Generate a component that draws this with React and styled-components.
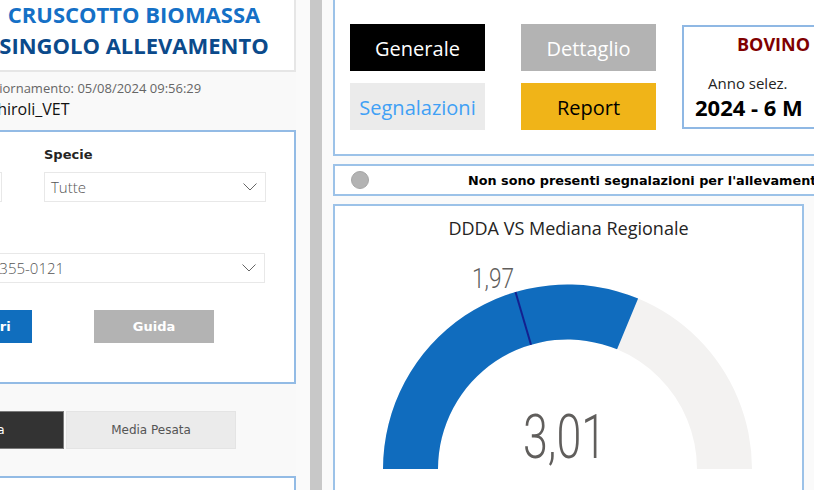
import React from 'react';
import styled, { createGlobalStyle } from 'styled-components';

const GlobalStyle = createGlobalStyle`
  html, body {
    margin: 0;
    padding: 0;
    background: #fafafa;
    overflow: hidden;
  }
  body {
    font-family: "Open Sans", "Liberation Sans", sans-serif;
  }
`;

const Page = styled.div`
  display: flex;
  width: 814px;
  height: 490px;
  overflow: hidden;
  background: #fafafa;
`;

/* ---------- left column ---------- */

const LeftColumn = styled.div`
  flex: 0 0 406px;
  margin-left: -110px;
  display: flex;
  flex-direction: column;
  background: #f9f9f9;
`;

const TitleBox = styled.div`
  margin: -4px 0 0 82px;
  height: 76px;
  box-sizing: border-box;
  border: 2px solid #e6e6e6;
  background: #fff;
  padding-top: 1px;
  display: flex;
  flex-direction: column;
  align-items: center;
`;

const TitleLine = styled.div`
  font-family: "Open Sans", sans-serif;
  font-weight: 700;
  font-size: 22px;
  line-height: 31px;
  white-space: nowrap;
  color: ${p => p.$color};
`;

const InfoLine = styled.div`
  padding-left: ${p => p.$indent}px;
  margin-top: ${p => p.$top}px;
  font-size: ${p => p.$size}px;
  line-height: ${p => p.$lh}px;
  color: ${p => p.$color};
  white-space: nowrap;
`;

const FilterBox = styled.div`
  margin-top: 11px;
  box-sizing: border-box;
  border: 2px solid #93bbe5;
  background: #fff;
  padding: 14px 28px 39px 18px;
`;

const FilterGrid = styled.div`
  display: grid;
  grid-template-columns: 92px 222px;
  column-gap: 42px;
  row-gap: 25px;
`;

const Field = styled.div`
  display: flex;
  flex-direction: column;
  grid-column: ${p => (p.$wide ? '1 / -1' : 'auto')};
  margin-right: ${p => (p.$wide ? 1 : 0)}px;
`;

const Label = styled.div`
  font-family: "DejaVu Sans", sans-serif;
  font-weight: 700;
  font-size: 13px;
  line-height: 18px;
  color: #252423;
  margin-bottom: 8px;
  white-space: nowrap;
`;

const Dropdown = styled.div`
  height: 30px;
  box-sizing: border-box;
  border: 1px solid #e8e8e8;
  background: #fff;
  display: flex;
  align-items: center;
  justify-content: space-between;
  padding: 0 8px 0 6px;
  font-family: "Open Sans", sans-serif;
  font-weight: 300;
  font-size: 15px;
  color: #555;
  white-space: nowrap;
  overflow: hidden;
`;

const ButtonRow = styled.div`
  display: flex;
  gap: 62px;
  margin: 27px 0 0 2px;
`;

const ActionButton = styled.div`
  width: 120px;
  height: 33px;
  background: ${p => p.$bg};
  color: #fff;
  display: flex;
  align-items: center;
  justify-content: center;
  font-family: "DejaVu Sans", sans-serif;
  font-weight: 700;
  font-size: 13px;
  white-space: nowrap;
`;

const ToggleRow = styled.div`
  display: flex;
  gap: 2px;
  margin: 27px 0 0 4px;
`;

const ToggleSegment = styled.div`
  width: 170px;
  height: 38px;
  box-sizing: border-box;
  border: 1px solid ${p => (p.$active ? '#7a7a7a' : '#e4e4e4')};
  background: ${p => (p.$active ? '#333333' : '#ebebeb')};
  color: ${p => (p.$active ? '#ffffff' : '#555555')};
  display: flex;
  align-items: center;
  justify-content: center;
  font-family: "DejaVu Sans", sans-serif;
  font-size: 12px;
`;

const BottomBox = styled.div`
  margin-top: 27px;
  flex: 1;
  border: 2px solid #93bbe5;
  border-bottom: none;
  background: #fff;
`;

/* ---------- separator ---------- */

const Separator = styled.div`
  flex: 0 0 12px;
  margin-left: 14px;
  background: #c8c8c8;
`;

/* ---------- right column ---------- */

const RightColumn = styled.div`
  flex: 0 0 560px;
  margin-left: 11px;
  display: flex;
  flex-direction: column;
`;

const TopBox = styled.div`
  margin-top: -4px;
  height: 160px;
  box-sizing: border-box;
  border: 2px solid #9cc2e8;
  background: #fff;
  padding: 26px 0 0 15px;
  display: flex;
  align-items: flex-start;
`;

const NavGrid = styled.div`
  display: grid;
  grid-template-columns: 135px 135px;
  grid-auto-rows: 47px;
  column-gap: 36px;
  row-gap: 12px;
`;

const NavButton = styled.div`
  background: ${p => p.$bg};
  color: ${p => p.$color};
  display: flex;
  align-items: center;
  justify-content: center;
  padding-top: 2px;
  box-sizing: border-box;
  font-size: 20px;
  white-space: nowrap;
`;

const InfoCard = styled.div`
  margin: 1px 0 0 26px;
  width: 140px;
  height: 104px;
  box-sizing: border-box;
  border: 2px solid #8fb8e4;
  background: #fff;
  padding-top: 6px;
`;

const CardLine = styled.div`
  padding-left: ${p => p.$indent}px;
  margin-top: ${p => p.$top}px;
  font-size: ${p => p.$size}px;
  line-height: ${p => p.$lh}px;
  font-weight: ${p => p.$weight};
  color: ${p => p.$color};
  white-space: nowrap;
`;

const NotifBar = styled.div`
  margin-top: 8px;
  height: 32px;
  box-sizing: border-box;
  border: 2px solid #9cc2e8;
  background: #fff;
  display: flex;
  align-items: center;
`;

const StatusDot = styled.div`
  width: 18px;
  height: 18px;
  box-sizing: border-box;
  margin-left: 16px;
  border-radius: 50%;
  background: #b3b3b3;
  border: 1px solid #a6a6a6;
`;

const NotifText = styled.div`
  margin-left: 99px;
  font-family: "DejaVu Sans", sans-serif;
  font-weight: 700;
  font-size: 12.8px;
  color: #000;
  white-space: nowrap;
`;

const GaugeBox = styled.div`
  margin-top: 8px;
  width: 471px;
  flex: 1;
  box-sizing: border-box;
  border: 2px solid #9cc2e8;
  border-bottom: none;
  background: #fff;
  padding-top: 10px;
`;

const GaugeTitle = styled.div`
  text-align: center;
  font-size: 18px;
  line-height: 24px;
  color: #252423;
`;

const GaugeSvg = styled.svg`
  display: block;
`;

const Chevron = () => (
  <svg width="14" height="8" viewBox="0 0 14 8">
    <polyline points="0.5,0.5 7,7 13.5,0.5" fill="none" stroke="#666" strokeWidth="1" />
  </svg>
);

const CX = 232.5;
const CY = 229;
const R_OUT = 184.5;
const R_IN = 129.5;

const pt = (deg, r) => {
  const a = (deg * Math.PI) / 180;
  return [CX + r * Math.cos(a), CY - r * Math.sin(a)];
};

const band = (fromDeg, toDeg) => {
  const [x1, y1] = pt(fromDeg, R_OUT);
  const [x2, y2] = pt(toDeg, R_OUT);
  const [x3, y3] = pt(toDeg, R_IN);
  const [x4, y4] = pt(fromDeg, R_IN);
  return `M${x1} ${y1} A${R_OUT} ${R_OUT} 0 0 1 ${x2} ${y2} L${x3} ${y3} A${R_IN} ${R_IN} 0 0 0 ${x4} ${y4} Z`;
};

const Gauge = ({ value, target, max }) => {
  const valueDeg = 180 - (value / max) * 180;
  const targetDeg = 180 - (target / max) * 180;
  const [tx1, ty1] = pt(targetDeg, R_OUT);
  const [tx2, ty2] = pt(targetDeg, R_IN);
  return (
    <GaugeSvg width="467" height="240" viewBox="0 0 467 240">
      <path d={band(180, 0)} fill="#f3f2f1" />
      <path d={band(180, valueDeg)} fill="#106cbe" />
      <line x1={tx1} y1={ty1} x2={tx2} y2={ty2} stroke="#14208f" strokeWidth="2" />
      <text x="158" y="48" textAnchor="middle" fontFamily="Roboto, sans-serif" fontWeight="300"
        fontSize="27" fill="#605e5c" textLength="42" lengthAdjust="spacingAndGlyphs">1,97</text>
      <text x="229.5" y="218" textAnchor="middle" fontFamily="Roboto, sans-serif" fontWeight="300"
        fontSize="62" fill="#605e5c" textLength="83" lengthAdjust="spacingAndGlyphs">3,01</text>
    </GaugeSvg>
  );
};

export default function App() {
  return (
    <Page>
      <GlobalStyle />
      <LeftColumn>
        <TitleBox>
          <TitleLine $color="#1570c6">CRUSCOTTO BIOMASSA</TitleLine>
          <TitleLine $color="#0b4a8b">SINGOLO ALLEVAMENTO</TitleLine>
        </TitleBox>
        <InfoLine $indent={44} $top={8} $size={13} $lh={17} $color="#666">
          Ultimo aggiornamento: 05/08/2024 09:56:29
        </InfoLine>
        <InfoLine $indent={48} $top={2} $size={16} $lh={20} $color="#111">
          Utente: hiroli_VET
        </InfoLine>
        <FilterBox>
          <FilterGrid>
            <Field>
              <Label>Anno</Label>
              <Dropdown>2024<Chevron /></Dropdown>
            </Field>
            <Field>
              <Label>Specie</Label>
              <Dropdown>Tutte<Chevron /></Dropdown>
            </Field>
            <Field $wide>
              <Label>Codice</Label>
              <Dropdown>IT00012TO0355-0121<Chevron /></Dropdown>
            </Field>
          </FilterGrid>
          <ButtonRow>
            <ActionButton $bg="#106ebe">Reset filtri</ActionButton>
            <ActionButton $bg="#b3b3b3">Guida</ActionButton>
          </ButtonRow>
        </FilterBox>
        <ToggleRow>
          <ToggleSegment $active>Mediana</ToggleSegment>
          <ToggleSegment>Media Pesata</ToggleSegment>
        </ToggleRow>
        <BottomBox />
      </LeftColumn>

      <Separator />

      <RightColumn>
        <TopBox>
          <NavGrid>
            <NavButton $bg="#000" $color="#fff">Generale</NavButton>
            <NavButton $bg="#b3b3b3" $color="#fff">Dettaglio</NavButton>
            <NavButton $bg="#ebebeb" $color="#3fa0f5">Segnalazioni</NavButton>
            <NavButton $bg="#f0b418" $color="#000">Report</NavButton>
          </NavGrid>
          <InfoCard>
            <CardLine $indent={53} $top={0} $size={18} $lh={22} $weight={700} $color="#800000">BOVINO</CardLine>
            <CardLine $indent={24} $top={18} $size={15} $lh={20} $weight={400} $color="#252423">Anno selez.</CardLine>
            <CardLine $indent={11} $top={1} $size={22} $lh={26} $weight={700} $color="#000">2024 - 6 M</CardLine>
          </InfoCard>
        </TopBox>
        <NotifBar>
          <StatusDot />
          <NotifText>Non sono presenti segnalazioni per l'allevamento selezionato</NotifText>
        </NotifBar>
        <GaugeBox>
          <GaugeTitle>DDDA VS Mediana Regionale</GaugeTitle>
          <Gauge value={3.01} target={1.97} max={4.816} />
        </GaugeBox>
      </RightColumn>
    </Page>
  );
}
